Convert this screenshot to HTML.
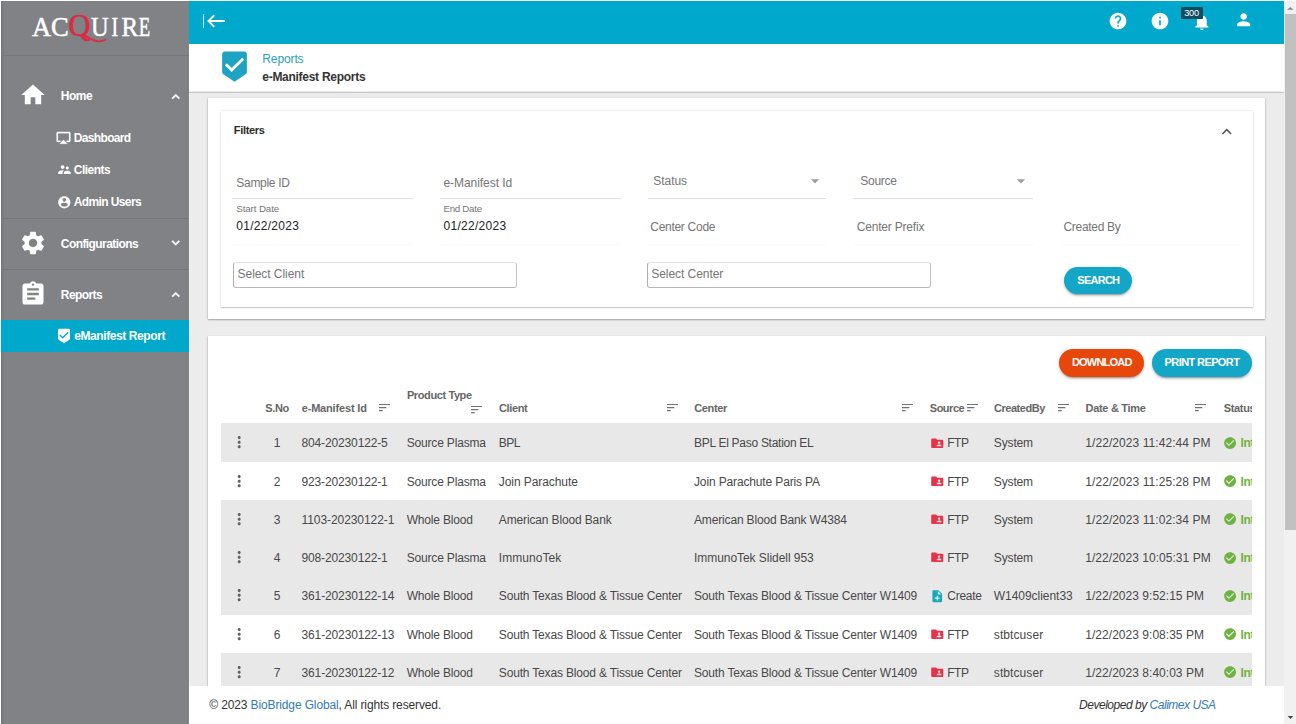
<!DOCTYPE html>
<html lang="en">
<head>
<meta charset="utf-8">
<title>e-Manifest Reports</title>
<style>
*{box-sizing:border-box;margin:0;padding:0}
html,body{width:1296px;height:724px;overflow:hidden;background:#fff}
body{font-family:"Liberation Sans",sans-serif;font-size:12px;color:#333;position:relative}
a{color:#337ab7;text-decoration:none}
.t{position:absolute;white-space:pre}
.ic{position:absolute;display:block}
.box{position:absolute}
#side{left:1px;top:1px;width:188px;height:723px;background:#808285}
#sideedge{left:1px;top:1px;width:4px;height:723px;background:linear-gradient(90deg,#76787b,#808285)}
.sdiv{left:1px;width:188px;height:1px;background:#747679}
#act{left:1px;top:319.6px;width:188px;height:32.9px;background:#00a9cb}
#top{left:189px;top:1px;width:1095px;height:43px;background:#00a9cb}
#crumb{left:189px;top:44px;width:1095px;height:48.5px;background:#fff;border-bottom:1px solid #c6c6c6;box-shadow:inset 0 -1px 1px rgba(0,0,0,.07)}
#main{left:189px;top:92.5px;width:1095px;height:594px;background:#ececec}
.card{background:#fff;box-shadow:0 1px 1.5px rgba(0,0,0,.3),1px 0 1px rgba(0,0,0,.05),-1px 0 1px rgba(0,0,0,.05)}
.panel{background:#fff;box-shadow:0 1px 1px rgba(0,0,0,.16),0 0 1.5px rgba(0,0,0,.22)}
.ul{height:1px;background:#e0e0e0}
.ul2{height:1px;background:#fafafa}
.inp{height:25.2px;border:1px solid;border-color:#e4e4e4 #c2c2c2 #b8b8b8 #b0b0b0;border-radius:3px;background:#fff}
.btn{border-radius:14px;box-shadow:0 3px 1px -2px rgba(0,0,0,.2),0 2px 2px 0 rgba(0,0,0,.14),0 1px 5px 0 rgba(0,0,0,.12)}
.row{left:221px;width:1031px;height:38.25px;background:#e8e8e8}
#tclip{left:0;top:337px;width:1252px;height:349.5px;overflow:hidden}
#tclip>*{margin-top:-337px}
#foot{left:189px;top:686.3px;width:1095px;height:38px;background:#fff}
#sb{left:1284px;top:1px;width:12px;height:723px;background:#f1f1f1}
#sbt{left:1285px;top:14.2px;width:11px;height:515.5px;background:#c1c1c1}
.badge{left:1180.8px;top:6.8px;width:21.8px;height:11.8px;background:#0c4c5e;border-radius:1px}
</style>
</head>
<body>
<div class="box" id="side"></div><div class="box" id="sideedge"></div>
<div class="box sdiv" style="top:55px"></div><div class="box sdiv" style="top:218px"></div><div class="box sdiv" style="top:269px"></div>
<div class="box" id="act"></div>
<svg class="ic" id="logo" style="left:28px;top:8px;width:130px;height:40px;overflow:visible" viewBox="0 0 130 40"><text x="4.10 22.90 40.40 63.00 83.40 93.60 110.70" y="27.6" font-family="'Liberation Serif',serif" font-size="26.5" fill="#fff" stroke="#fff" stroke-width="0.5">AC<tspan fill="#dd2a45" stroke="#dd2a45" stroke-width="0.7" font-size="30.5" dy="0.5">Q</tspan><tspan dy="-0.5" textLength="17.6" lengthAdjust="spacingAndGlyphs">U</tspan><tspan textLength="6.6" lengthAdjust="spacingAndGlyphs">I</tspan><tspan textLength="16.6" lengthAdjust="spacingAndGlyphs">R</tspan><tspan textLength="11.4" lengthAdjust="spacingAndGlyphs">E</tspan></text><path d="M55 25.8 C60.500 30.200 66 33.400 70.500 33.300 C73.500 33.200 76 32.600 77.500 31.700" fill="none" stroke="#dd2a45" stroke-width="1.8" stroke-linecap="round"/></svg>
<svg class="ic" style="left:19.30px;top:81.40px;width:28px;height:28px;fill:#fff;" viewBox="0 0 24 24"><path d="M10 20v-6h4v6h5v-8h3L12 3 2 12h3v8z"/></svg>
<svg class="ic" style="left:19.30px;top:229.20px;width:28px;height:28px;fill:#fff;" viewBox="0 0 24 24"><path d="M19.14 12.94c.04-.3.06-.61.06-.94 0-.32-.02-.64-.07-.94l2.03-1.58c.18-.14.23-.41.12-.61l-1.92-3.32c-.12-.22-.37-.29-.59-.22l-2.39.96c-.5-.38-1.03-.7-1.62-.94l-.36-2.54c-.04-.24-.24-.41-.48-.41h-3.84c-.24 0-.43.17-.47.41l-.36 2.54c-.59.24-1.13.57-1.62.94l-2.39-.96c-.22-.08-.47 0-.59.22L2.74 8.87c-.12.21-.08.47.12.61l2.03 1.58c-.05.3-.09.63-.09.94s.02.64.07.94l-2.03 1.58c-.18.14-.23.41-.12.61l1.92 3.32c.12.22.37.29.59.22l2.39-.96c.5.38 1.03.7 1.62.94l.36 2.54c.05.24.24.41.48.41h3.84c.24 0 .44-.17.47-.41l.36-2.54c.59-.24 1.13-.56 1.62-.94l2.39.96c.22.08.47 0 .59-.22l1.92-3.32c.12-.22.07-.47-.12-.61l-2.01-1.58zM12 15.6c-1.98 0-3.6-1.62-3.6-3.6s1.62-3.6 3.6-3.6 3.6 1.62 3.6 3.6-1.62 3.6-3.6 3.6z"/></svg>
<svg class="ic" style="left:19.20px;top:280.20px;width:28px;height:28px;fill:#fff;" viewBox="0 0 24 24"><path d="M19 3h-4.18C14.4 1.84 13.3 1 12 1c-1.3 0-2.4.84-2.82 2H5c-1.1 0-2 .9-2 2v14c0 1.1.9 2 2 2h14c1.1 0 2-.9 2-2V5c0-1.1-.9-2-2-2zm-7 0c.55 0 1 .45 1 1s-.45 1-1 1-1-.45-1-1 .45-1 1-1zm2 14H7v-2h7v2zm3-4H7v-2h10v2zm0-4H7V7h10v2z"/></svg>
<svg class="ic" style="left:168.15px;top:89.25px;width:15.5px;height:15.5px;fill:#fff;stroke:#fff;stroke-width:.9" viewBox="0 0 24 24"><path d="M12 8l-6 6 1.41 1.41L12 10.83l4.59 4.58L18 14z"/></svg>
<svg class="ic" style="left:168.15px;top:235.25px;width:15.5px;height:15.5px;fill:#fff;stroke:#fff;stroke-width:.9" viewBox="0 0 24 24"><path d="M16.59 8.59L12 13.17 7.41 8.59 6 10l6 6 6-6z"/></svg>
<svg class="ic" style="left:168.15px;top:287.25px;width:15.5px;height:15.5px;fill:#fff;stroke:#fff;stroke-width:.9" viewBox="0 0 24 24"><path d="M12 8l-6 6 1.41 1.41L12 10.83l4.59 4.58L18 14z"/></svg>
<svg class="ic" style="left:56.40px;top:129.70px;width:15px;height:15px;fill:#fff;stroke:#fff;stroke-width:.5" viewBox="0 0 24 24"><path d="M6 22h12l-6-6zM21 3H3c-1.1 0-2 .9-2 2v12c0 1.1.9 2 2 2h4v-2H3V5h18v12h-4v2h4c1.1 0 2-.9 2-2V5c0-1.1-.9-2-2-2z"/></svg>
<svg class="ic" style="left:56.60px;top:162.10px;width:15px;height:15px;fill:#fff;" viewBox="0 0 24 24"><path d="M16.5 12c1.38 0 2.49-1.12 2.49-2.5S17.88 7 16.5 7C15.12 7 14 8.12 14 9.5s1.12 2.5 2.5 2.5zM9 11c1.66 0 2.99-1.34 2.99-3S10.66 5 9 5C7.34 5 6 6.34 6 8s1.34 3 3 3zm7.5 3c-1.83 0-5.5.92-5.5 2.75V19h11v-2.25c0-1.83-3.67-2.75-5.5-2.75zM9 13c-2.33 0-7 1.17-7 3.5V19h7v-2.25c0-.85.33-2.34 2.37-3.47C10.5 13.1 9.66 13 9 13z"/></svg>
<svg class="ic" style="left:56.60px;top:194.70px;width:14.6px;height:14.6px;fill:#fff;" viewBox="0 0 24 24"><path d="M12 2C6.48 2 2 6.48 2 12s4.48 10 10 10 10-4.48 10-10S17.52 2 12 2zm0 3c1.66 0 3 1.34 3 3s-1.34 3-3 3-3-1.34-3-3 1.34-3 3-3zm0 14.2c-2.5 0-4.71-1.28-6-3.22.03-1.99 4-3.08 6-3.08 1.99 0 5.970 1.09 6 3.08-1.29 1.940-3.500 3.220-6 3.220z"/></svg>
<svg class="ic" style="left:56.00px;top:328.00px;width:16px;height:16px;fill:#fff;" viewBox="0 0 24 24"><path d="M19 1H5c-1.1 0-1.99.9-1.99 2L3 15.93c0 .69.35 1.3.88 1.66L12 23l8.11-5.41c.53-.36.88-.97.88-1.66L21 3c0-1.1-.9-2-2-2zm-9 15l-5-5 1.41-1.41L10 13.17l7.59-7.590L19 7l-9 9z"/></svg>
<span class="t" style="left:60.8px;top:87.8px;font-size:12px;line-height:16px;color:#fff;font-weight:700;letter-spacing:-0.46px;">Home</span>
<span class="t" style="left:73.8px;top:129.5px;font-size:12px;line-height:16px;color:#fff;font-weight:700;letter-spacing:-0.66px;">Dashboard</span>
<span class="t" style="left:73.8px;top:161.6px;font-size:12px;line-height:16px;color:#fff;font-weight:700;letter-spacing:-0.51px;">Clients</span>
<span class="t" style="left:73.8px;top:193.6px;font-size:12px;line-height:16px;color:#fff;font-weight:700;letter-spacing:-0.62px;">Admin Users</span>
<span class="t" style="left:60.8px;top:235.8px;font-size:12px;line-height:16px;color:#fff;font-weight:700;letter-spacing:-0.57px;">Configurations</span>
<span class="t" style="left:60.8px;top:286.8px;font-size:12px;line-height:16px;color:#fff;font-weight:700;letter-spacing:-0.57px;">Reports</span>
<span class="t" style="left:74.2px;top:327.8px;font-size:12px;line-height:16px;color:#fff;font-weight:700;letter-spacing:-0.41px;">eManifest Report</span>
<div class="box" id="top"></div>
<svg class="ic" style="left:200px;top:10px;width:30px;height:22px" viewBox="0 0 30 22"><path d="M3.5 4v14" stroke="#d5f0f6" stroke-width="1" fill="none"/><path d="M25 11H9M14.3 5.2L8.5 11l5.800 5.800" stroke="#fff" stroke-width="1.9" fill="none"/></svg>
<svg class="ic" style="left:1108.00px;top:11.30px;width:20px;height:20px;fill:#fff;" viewBox="0 0 24 24"><path d="M12 2C6.48 2 2 6.48 2 12s4.48 10 10 10 10-4.48 10-10S17.52 2 12 2zm1 17h-2v-2h2v2zm2.07-7.75l-.9.92C13.45 12.9 13 13.5 13 15h-2v-.5c0-1.1.45-2.1 1.17-2.83l1.24-1.260c.37-.36.59-.86.59-1.410 0-1.100-.9-2-2-2s-2 .9-2 2H8c0-2.210 1.790-4 4-4s4 1.790 4 4c0 .88-.36 1.680-.93 2.250z"/></svg>
<svg class="ic" style="left:1150.00px;top:11.30px;width:20px;height:20px;fill:#fff;" viewBox="0 0 24 24"><path d="M12 2C6.48 2 2 6.48 2 12s4.48 10 10 10 10-4.48 10-10S17.52 2 12 2zm1 15h-2v-6h2v6zm0-8h-2V7h2v2z"/></svg>
<svg class="ic" style="left:1191.65px;top:12.35px;width:19.7px;height:19.7px;fill:#fff;" viewBox="0 0 24 24"><path d="M12 22c1.1 0 2-.9 2-2h-4c0 1.1.89 2 2 2zm6-6v-5c0-3.07-1.64-5.64-4.5-6.32V4c0-.83-.67-1.5-1.5-1.500s-1.500.67-1.500 1.500v.68C7.630 5.360 6 7.920 6 11v5l-2 2v1h16v-1l-2-2z"/></svg>
<svg class="ic" style="left:1233.70px;top:9.80px;width:19.4px;height:19.4px;fill:#fff;" viewBox="0 0 24 24"><path d="M12 12c2.21 0 4-1.79 4-4s-1.79-4-4-4-4 1.79-4 4 1.79 4 4 4zm0 2c-2.67 0-8 1.340-8 4v2h16v-2c0-2.660-5.330-4-8-4z"/></svg>
<div class="box badge"></div>
<div class="box" id="crumb"></div>
<svg class="ic" style="left:217.90px;top:50.30px;width:33px;height:33px;fill:#1ea3c3;" viewBox="0 0 24 24"><path d="M19 1H5c-1.1 0-1.99.9-1.99 2L3 15.93c0 .69.35 1.3.88 1.66L12 23l8.11-5.41c.53-.36.88-.97.88-1.66L21 3c0-1.1-.9-2-2-2zm-9 15l-5-5 1.41-1.41L10 13.17l7.59-7.590L19 7l-9 9z"/></svg>
<div class="box" id="main"></div><div class="box" style="left:189px;top:93px;width:1px;height:593px;background:#f3f4f6"></div>
<div class="box card" style="left:208px;top:98px;width:1057px;height:221.3px"></div>
<div class="box panel" style="left:221px;top:111.4px;width:1031.5px;height:195.6px"></div>
<svg class="ic" style="left:1217.25px;top:121.95px;width:19.5px;height:19.5px;fill:#555;" viewBox="0 0 24 24"><path d="M12 8l-6 6 1.41 1.41L12 10.83l4.59 4.58L18 14z"/></svg>
<div class="box ul" style="left:232.2px;top:198px;width:180.8px"></div>
<div class="box ul" style="left:439.9px;top:198px;width:181.2px"></div>
<div class="box ul" style="left:648px;top:198px;width:177.5px"></div>
<div class="box ul" style="left:852.6px;top:198px;width:180px"></div>
<div class="box ul2" style="left:232.2px;top:244.2px;width:180.5px"></div>
<div class="box ul2" style="left:439.9px;top:244.2px;width:180.5px"></div>
<div class="box ul2" style="left:646.8px;top:244.2px;width:180.5px"></div>
<div class="box ul2" style="left:853.7px;top:244.2px;width:180.5px"></div>
<div class="box ul2" style="left:1060.5px;top:244.2px;width:180.5px"></div>
<svg class="ic" style="left:805.10px;top:171.40px;width:20px;height:20px;fill:#9c9c9c;" viewBox="0 0 24 24"><path d="M7 10l5 5 5-5z"/></svg>
<svg class="ic" style="left:1011.40px;top:171.40px;width:20px;height:20px;fill:#9c9c9c;" viewBox="0 0 24 24"><path d="M7 10l5 5 5-5z"/></svg>
<div class="box inp" style="left:233.3px;top:262.4px;width:283.4px"></div>
<div class="box inp" style="left:647.2px;top:262.4px;width:283.4px"></div>
<div class="box btn" style="left:1064.2px;top:266.7px;width:67.7px;height:27.2px;background:#14a6c6"></div>
<div class="box card" style="left:208px;top:336px;width:1057px;height:360px"></div>
<div class="box btn" style="left:1059px;top:349px;width:85.4px;height:27.5px;background:#e8470b"></div>
<div class="box btn" style="left:1152px;top:349px;width:100px;height:27.5px;background:#14a6c6"></div>
<div class="box" id="tclip">
<div class="box row" style="top:423.3px"></div>
<div class="box row" style="top:499.8px"></div>
<div class="box row" style="top:538.0px"></div>
<div class="box row" style="top:576.3px"></div>
<div class="box row" style="top:652.8px"></div>
<svg class="ic" style="left:230.30px;top:433.45px;width:18.4px;height:18.4px;fill:#606060;" viewBox="0 0 24 24"><path d="M12 8c1.1 0 2-.9 2-2s-.9-2-2-2-2 .9-2 2 .9 2 2 2zm0 2c-1.1 0-2 .9-2 2s.9 2 2 2 2-.9 2-2-.9-2-2-2zm0 6c-1.100 0-2 .9-2 2s.9 2 2 2 2-.9 2-2-.9-2-2-2z"/></svg>
<svg class="ic" style="left:929.65px;top:435.70px;width:14.5px;height:14.5px;fill:#e7324a;" viewBox="0 0 24 24"><path d="M20 6h-8l-2-2H4c-1.1 0-1.99.9-1.99 2L2 18c0 1.100.9 2 2 2h16c1.100 0 2-.9 2-2V8c0-1.100-.9-2-2-2zm-5 3c1.100 0 2 .9 2 2s-.9 2-2 2-2-.9-2-2 .9-2 2-2zm4 8h-8v-1c0-1.330 2.670-2 4-2s4 .670 4 2v1z"/></svg>
<svg class="ic" style="left:1223.10px;top:435.85px;width:14.2px;height:14.2px;fill:#6cb33f;" viewBox="0 0 24 24"><path d="M12 2C6.48 2 2 6.48 2 12s4.480 10 10 10 10-4.480 10-10S17.520 2 12 2zm-2 15l-5-5 1.410-1.410L10 14.170l7.590-7.590L19 8l-9 9z"/></svg>
<svg class="ic" style="left:230.30px;top:471.70px;width:18.4px;height:18.4px;fill:#606060;" viewBox="0 0 24 24"><path d="M12 8c1.1 0 2-.9 2-2s-.9-2-2-2-2 .9-2 2 .9 2 2 2zm0 2c-1.1 0-2 .9-2 2s.9 2 2 2 2-.9 2-2-.9-2-2-2zm0 6c-1.100 0-2 .9-2 2s.9 2 2 2 2-.9 2-2-.9-2-2-2z"/></svg>
<svg class="ic" style="left:929.65px;top:473.95px;width:14.5px;height:14.5px;fill:#e7324a;" viewBox="0 0 24 24"><path d="M20 6h-8l-2-2H4c-1.1 0-1.99.9-1.99 2L2 18c0 1.100.9 2 2 2h16c1.100 0 2-.9 2-2V8c0-1.100-.9-2-2-2zm-5 3c1.100 0 2 .9 2 2s-.9 2-2 2-2-.9-2-2 .9-2 2-2zm4 8h-8v-1c0-1.330 2.670-2 4-2s4 .670 4 2v1z"/></svg>
<svg class="ic" style="left:1223.10px;top:474.10px;width:14.2px;height:14.2px;fill:#6cb33f;" viewBox="0 0 24 24"><path d="M12 2C6.48 2 2 6.48 2 12s4.480 10 10 10 10-4.480 10-10S17.520 2 12 2zm-2 15l-5-5 1.410-1.410L10 14.170l7.590-7.590L19 8l-9 9z"/></svg>
<svg class="ic" style="left:230.30px;top:509.95px;width:18.4px;height:18.4px;fill:#606060;" viewBox="0 0 24 24"><path d="M12 8c1.1 0 2-.9 2-2s-.9-2-2-2-2 .9-2 2 .9 2 2 2zm0 2c-1.1 0-2 .9-2 2s.9 2 2 2 2-.9 2-2-.9-2-2-2zm0 6c-1.100 0-2 .9-2 2s.9 2 2 2 2-.9 2-2-.9-2-2-2z"/></svg>
<svg class="ic" style="left:929.65px;top:512.20px;width:14.5px;height:14.5px;fill:#e7324a;" viewBox="0 0 24 24"><path d="M20 6h-8l-2-2H4c-1.1 0-1.99.9-1.99 2L2 18c0 1.100.9 2 2 2h16c1.100 0 2-.9 2-2V8c0-1.100-.9-2-2-2zm-5 3c1.100 0 2 .9 2 2s-.9 2-2 2-2-.9-2-2 .9-2 2-2zm4 8h-8v-1c0-1.330 2.670-2 4-2s4 .670 4 2v1z"/></svg>
<svg class="ic" style="left:1223.10px;top:512.35px;width:14.2px;height:14.2px;fill:#6cb33f;" viewBox="0 0 24 24"><path d="M12 2C6.48 2 2 6.48 2 12s4.480 10 10 10 10-4.480 10-10S17.520 2 12 2zm-2 15l-5-5 1.410-1.410L10 14.170l7.590-7.590L19 8l-9 9z"/></svg>
<svg class="ic" style="left:230.30px;top:548.20px;width:18.4px;height:18.4px;fill:#606060;" viewBox="0 0 24 24"><path d="M12 8c1.1 0 2-.9 2-2s-.9-2-2-2-2 .9-2 2 .9 2 2 2zm0 2c-1.1 0-2 .9-2 2s.9 2 2 2 2-.9 2-2-.9-2-2-2zm0 6c-1.100 0-2 .9-2 2s.9 2 2 2 2-.9 2-2-.9-2-2-2z"/></svg>
<svg class="ic" style="left:929.65px;top:550.45px;width:14.5px;height:14.5px;fill:#e7324a;" viewBox="0 0 24 24"><path d="M20 6h-8l-2-2H4c-1.1 0-1.99.9-1.99 2L2 18c0 1.100.9 2 2 2h16c1.100 0 2-.9 2-2V8c0-1.100-.9-2-2-2zm-5 3c1.100 0 2 .9 2 2s-.9 2-2 2-2-.9-2-2 .9-2 2-2zm4 8h-8v-1c0-1.330 2.670-2 4-2s4 .670 4 2v1z"/></svg>
<svg class="ic" style="left:1223.10px;top:550.60px;width:14.2px;height:14.2px;fill:#6cb33f;" viewBox="0 0 24 24"><path d="M12 2C6.48 2 2 6.48 2 12s4.480 10 10 10 10-4.480 10-10S17.520 2 12 2zm-2 15l-5-5 1.410-1.410L10 14.170l7.590-7.590L19 8l-9 9z"/></svg>
<svg class="ic" style="left:230.30px;top:586.45px;width:18.4px;height:18.4px;fill:#606060;" viewBox="0 0 24 24"><path d="M12 8c1.1 0 2-.9 2-2s-.9-2-2-2-2 .9-2 2 .9 2 2 2zm0 2c-1.1 0-2 .9-2 2s.9 2 2 2 2-.9 2-2-.9-2-2-2zm0 6c-1.100 0-2 .9-2 2s.9 2 2 2 2-.9 2-2-.9-2-2-2z"/></svg>
<svg class="ic" style="left:929.65px;top:588.70px;width:14.5px;height:14.5px;fill:#16a9b9;" viewBox="0 0 24 24"><path d="M14 2H6c-1.100 0-1.990.9-1.990 2L4 20c0 1.100.890 2 1.990 2H18c1.100 0 2-.9 2-2V8l-6-6zm2 14h-3v3h-2v-3H8v-2h3v-3h2v3h3v2zm-3-7V3.500L18.500 9H13z"/></svg>
<svg class="ic" style="left:1223.10px;top:588.85px;width:14.2px;height:14.2px;fill:#6cb33f;" viewBox="0 0 24 24"><path d="M12 2C6.48 2 2 6.48 2 12s4.480 10 10 10 10-4.480 10-10S17.520 2 12 2zm-2 15l-5-5 1.410-1.410L10 14.170l7.590-7.590L19 8l-9 9z"/></svg>
<svg class="ic" style="left:230.30px;top:624.70px;width:18.4px;height:18.4px;fill:#606060;" viewBox="0 0 24 24"><path d="M12 8c1.1 0 2-.9 2-2s-.9-2-2-2-2 .9-2 2 .9 2 2 2zm0 2c-1.1 0-2 .9-2 2s.9 2 2 2 2-.9 2-2-.9-2-2-2zm0 6c-1.100 0-2 .9-2 2s.9 2 2 2 2-.9 2-2-.9-2-2-2z"/></svg>
<svg class="ic" style="left:929.65px;top:626.95px;width:14.5px;height:14.5px;fill:#e7324a;" viewBox="0 0 24 24"><path d="M20 6h-8l-2-2H4c-1.1 0-1.99.9-1.99 2L2 18c0 1.100.9 2 2 2h16c1.100 0 2-.9 2-2V8c0-1.100-.9-2-2-2zm-5 3c1.100 0 2 .9 2 2s-.9 2-2 2-2-.9-2-2 .9-2 2-2zm4 8h-8v-1c0-1.330 2.670-2 4-2s4 .670 4 2v1z"/></svg>
<svg class="ic" style="left:1223.10px;top:627.10px;width:14.2px;height:14.2px;fill:#6cb33f;" viewBox="0 0 24 24"><path d="M12 2C6.48 2 2 6.48 2 12s4.480 10 10 10 10-4.480 10-10S17.520 2 12 2zm-2 15l-5-5 1.410-1.410L10 14.170l7.590-7.590L19 8l-9 9z"/></svg>
<svg class="ic" style="left:230.30px;top:662.95px;width:18.4px;height:18.4px;fill:#606060;" viewBox="0 0 24 24"><path d="M12 8c1.1 0 2-.9 2-2s-.9-2-2-2-2 .9-2 2 .9 2 2 2zm0 2c-1.1 0-2 .9-2 2s.9 2 2 2 2-.9 2-2-.9-2-2-2zm0 6c-1.100 0-2 .9-2 2s.9 2 2 2 2-.9 2-2-.9-2-2-2z"/></svg>
<svg class="ic" style="left:929.65px;top:665.20px;width:14.5px;height:14.5px;fill:#e7324a;" viewBox="0 0 24 24"><path d="M20 6h-8l-2-2H4c-1.1 0-1.99.9-1.99 2L2 18c0 1.100.9 2 2 2h16c1.100 0 2-.9 2-2V8c0-1.100-.9-2-2-2zm-5 3c1.100 0 2 .9 2 2s-.9 2-2 2-2-.9-2-2 .9-2 2-2zm4 8h-8v-1c0-1.330 2.670-2 4-2s4 .670 4 2v1z"/></svg>
<svg class="ic" style="left:1223.10px;top:665.35px;width:14.2px;height:14.2px;fill:#6cb33f;" viewBox="0 0 24 24"><path d="M12 2C6.48 2 2 6.48 2 12s4.480 10 10 10 10-4.480 10-10S17.520 2 12 2zm-2 15l-5-5 1.410-1.410L10 14.170l7.590-7.590L19 8l-9 9z"/></svg>
<svg class="ic" style="left:379.3px;top:403.9px;width:12px;height:8px;fill:#727272" viewBox="0 0 12 8"><path d="M0 0h11v1.120H0zM0 3.050h7.350v1.120H0zM0 6.100h3.700v1.120H0z"/></svg>
<svg class="ic" style="left:471.1px;top:405.9px;width:12px;height:8px;fill:#727272" viewBox="0 0 12 8"><path d="M0 0h11v1.120H0zM0 3.050h7.350v1.120H0zM0 6.100h3.700v1.120H0z"/></svg>
<svg class="ic" style="left:666.8px;top:403.9px;width:12px;height:8px;fill:#727272" viewBox="0 0 12 8"><path d="M0 0h11v1.120H0zM0 3.050h7.350v1.120H0zM0 6.100h3.700v1.120H0z"/></svg>
<svg class="ic" style="left:902px;top:403.9px;width:12px;height:8px;fill:#727272" viewBox="0 0 12 8"><path d="M0 0h11v1.120H0zM0 3.050h7.350v1.120H0zM0 6.100h3.700v1.120H0z"/></svg>
<svg class="ic" style="left:966.8px;top:403.9px;width:12px;height:8px;fill:#727272" viewBox="0 0 12 8"><path d="M0 0h11v1.120H0zM0 3.050h7.350v1.120H0zM0 6.100h3.700v1.120H0z"/></svg>
<svg class="ic" style="left:1058px;top:403.9px;width:12px;height:8px;fill:#727272" viewBox="0 0 12 8"><path d="M0 0h11v1.120H0zM0 3.050h7.350v1.120H0zM0 6.100h3.700v1.120H0z"/></svg>
<svg class="ic" style="left:1195.4px;top:403.9px;width:12px;height:8px;fill:#727272" viewBox="0 0 12 8"><path d="M0 0h11v1.120H0zM0 3.050h7.350v1.120H0zM0 6.100h3.700v1.120H0z"/></svg>
<span class="t" style="left:265.2px;top:401.1px;font-size:11px;line-height:14px;color:#666;font-weight:700;letter-spacing:-0.34px;">S.No</span>
<span class="t" style="left:301.7px;top:401.1px;font-size:11px;line-height:14px;color:#666;font-weight:700;letter-spacing:-0.17px;">e-Manifest Id</span>
<span class="t" style="left:406.9px;top:388.0px;font-size:11px;line-height:14px;color:#666;font-weight:700;letter-spacing:-0.39px;">Product Type</span>
<span class="t" style="left:499.0px;top:401.1px;font-size:11px;line-height:14px;color:#666;font-weight:700;letter-spacing:-0.36px;">Client</span>
<span class="t" style="left:694.3px;top:401.1px;font-size:11px;line-height:14px;color:#666;font-weight:700;letter-spacing:-0.38px;">Center</span>
<span class="t" style="left:929.8px;top:401.1px;font-size:11px;line-height:14px;color:#666;font-weight:700;letter-spacing:-0.49px;">Source</span>
<span class="t" style="left:994.0px;top:401.1px;font-size:11px;line-height:14px;color:#666;font-weight:700;letter-spacing:-0.47px;">CreatedBy</span>
<span class="t" style="left:1085.6px;top:401.1px;font-size:11px;line-height:14px;color:#666;font-weight:700;letter-spacing:-0.32px;">Date &amp; Time</span>
<span class="t" style="left:1223.7px;top:401.1px;font-size:11px;line-height:14px;color:#666;font-weight:700;letter-spacing:-0.33px;">Status</span>
<span class="t" style="left:273.7px;top:435.3px;font-size:12px;line-height:16px;color:#484848;letter-spacing:-0.05px;">1</span>
<span class="t" style="left:301.5px;top:435.3px;font-size:12px;line-height:16px;color:#484848;letter-spacing:-0.14px;">804-20230122-5</span>
<span class="t" style="left:406.7px;top:435.3px;font-size:12px;line-height:16px;color:#484848;letter-spacing:-0.17px;">Source Plasma</span>
<span class="t" style="left:498.8px;top:435.3px;font-size:12px;line-height:16px;color:#484848;letter-spacing:-0.51px;">BPL</span>
<span class="t" style="left:694.0px;top:435.3px;font-size:12px;line-height:16px;color:#484848;letter-spacing:-0.28px;">BPL El Paso Station EL</span>
<span class="t" style="left:947.3px;top:435.3px;font-size:12px;line-height:16px;color:#484848;letter-spacing:-0.51px;">FTP</span>
<span class="t" style="left:993.8px;top:435.3px;font-size:12px;line-height:16px;color:#484848;letter-spacing:-0.14px;">System</span>
<span class="t" style="left:1085.3px;top:435.3px;font-size:12px;line-height:16px;color:#484848;letter-spacing:0.07px;">1/22/2023 11:42:44 PM</span>
<span class="t" style="left:1240.5px;top:435.3px;font-size:12px;line-height:16px;color:#6cb33f;font-weight:700;letter-spacing:-0.27px;">Interfaced</span>
<span class="t" style="left:273.7px;top:473.5px;font-size:12px;line-height:16px;color:#484848;letter-spacing:-0.05px;">2</span>
<span class="t" style="left:301.5px;top:473.5px;font-size:12px;line-height:16px;color:#484848;letter-spacing:-0.14px;">923-20230122-1</span>
<span class="t" style="left:406.7px;top:473.5px;font-size:12px;line-height:16px;color:#484848;letter-spacing:-0.17px;">Source Plasma</span>
<span class="t" style="left:498.8px;top:473.5px;font-size:12px;line-height:16px;color:#484848;letter-spacing:-0.08px;">Join Parachute</span>
<span class="t" style="left:694.0px;top:473.5px;font-size:12px;line-height:16px;color:#484848;letter-spacing:-0.14px;">Join Parachute Paris PA</span>
<span class="t" style="left:947.3px;top:473.5px;font-size:12px;line-height:16px;color:#484848;letter-spacing:-0.51px;">FTP</span>
<span class="t" style="left:993.8px;top:473.5px;font-size:12px;line-height:16px;color:#484848;letter-spacing:-0.14px;">System</span>
<span class="t" style="left:1085.3px;top:473.5px;font-size:12px;line-height:16px;color:#484848;letter-spacing:0.07px;">1/22/2023 11:25:28 PM</span>
<span class="t" style="left:1240.5px;top:473.5px;font-size:12px;line-height:16px;color:#6cb33f;font-weight:700;letter-spacing:-0.27px;">Interfaced</span>
<span class="t" style="left:273.7px;top:511.8px;font-size:12px;line-height:16px;color:#484848;letter-spacing:-0.05px;">3</span>
<span class="t" style="left:301.5px;top:511.8px;font-size:12px;line-height:16px;color:#484848;letter-spacing:-0.07px;">1103-20230122-1</span>
<span class="t" style="left:406.7px;top:511.8px;font-size:12px;line-height:16px;color:#484848;letter-spacing:-0.17px;">Whole Blood</span>
<span class="t" style="left:498.8px;top:511.8px;font-size:12px;line-height:16px;color:#484848;letter-spacing:-0.14px;">American Blood Bank</span>
<span class="t" style="left:694.0px;top:511.8px;font-size:12px;line-height:16px;color:#484848;letter-spacing:-0.16px;">American Blood Bank W4384</span>
<span class="t" style="left:947.3px;top:511.8px;font-size:12px;line-height:16px;color:#484848;letter-spacing:-0.51px;">FTP</span>
<span class="t" style="left:993.8px;top:511.8px;font-size:12px;line-height:16px;color:#484848;letter-spacing:-0.14px;">System</span>
<span class="t" style="left:1085.3px;top:511.8px;font-size:12px;line-height:16px;color:#484848;letter-spacing:0.07px;">1/22/2023 11:02:34 PM</span>
<span class="t" style="left:1240.5px;top:511.8px;font-size:12px;line-height:16px;color:#6cb33f;font-weight:700;letter-spacing:-0.27px;">Interfaced</span>
<span class="t" style="left:273.7px;top:550.0px;font-size:12px;line-height:16px;color:#484848;letter-spacing:-0.05px;">4</span>
<span class="t" style="left:301.5px;top:550.0px;font-size:12px;line-height:16px;color:#484848;letter-spacing:-0.14px;">908-20230122-1</span>
<span class="t" style="left:406.7px;top:550.0px;font-size:12px;line-height:16px;color:#484848;letter-spacing:-0.17px;">Source Plasma</span>
<span class="t" style="left:498.8px;top:550.0px;font-size:12px;line-height:16px;color:#484848;letter-spacing:0.04px;">ImmunoTek</span>
<span class="t" style="left:694.0px;top:550.0px;font-size:12px;line-height:16px;color:#484848;letter-spacing:-0.05px;">ImmunoTek Slidell 953</span>
<span class="t" style="left:947.3px;top:550.0px;font-size:12px;line-height:16px;color:#484848;letter-spacing:-0.51px;">FTP</span>
<span class="t" style="left:993.8px;top:550.0px;font-size:12px;line-height:16px;color:#484848;letter-spacing:-0.14px;">System</span>
<span class="t" style="left:1085.3px;top:550.0px;font-size:12px;line-height:16px;color:#484848;letter-spacing:0.03px;">1/22/2023 10:05:31 PM</span>
<span class="t" style="left:1240.5px;top:550.0px;font-size:12px;line-height:16px;color:#6cb33f;font-weight:700;letter-spacing:-0.27px;">Interfaced</span>
<span class="t" style="left:273.7px;top:588.3px;font-size:12px;line-height:16px;color:#484848;letter-spacing:-0.05px;">5</span>
<span class="t" style="left:301.5px;top:588.3px;font-size:12px;line-height:16px;color:#484848;letter-spacing:-0.13px;">361-20230122-14</span>
<span class="t" style="left:406.7px;top:588.3px;font-size:12px;line-height:16px;color:#484848;letter-spacing:-0.17px;">Whole Blood</span>
<span class="t" style="left:498.8px;top:588.3px;font-size:12px;line-height:16px;color:#484848;letter-spacing:-0.17px;">South Texas Blood &amp; Tissue Center</span>
<span class="t" style="left:694.0px;top:588.3px;font-size:12px;line-height:16px;color:#484848;letter-spacing:-0.18px;">South Texas Blood &amp; Tissue Center W1409</span>
<span class="t" style="left:947.3px;top:588.3px;font-size:12px;line-height:16px;color:#484848;letter-spacing:-0.27px;">Create</span>
<span class="t" style="left:993.8px;top:588.3px;font-size:12px;line-height:16px;color:#484848;letter-spacing:-0.04px;">W1409client33</span>
<span class="t" style="left:1085.3px;top:588.3px;font-size:12px;line-height:16px;color:#484848;letter-spacing:0.03px;">1/22/2023 9:52:15 PM</span>
<span class="t" style="left:1240.5px;top:588.3px;font-size:12px;line-height:16px;color:#6cb33f;font-weight:700;letter-spacing:-0.27px;">Interfaced</span>
<span class="t" style="left:273.7px;top:626.5px;font-size:12px;line-height:16px;color:#484848;letter-spacing:-0.05px;">6</span>
<span class="t" style="left:301.5px;top:626.5px;font-size:12px;line-height:16px;color:#484848;letter-spacing:-0.13px;">361-20230122-13</span>
<span class="t" style="left:406.7px;top:626.5px;font-size:12px;line-height:16px;color:#484848;letter-spacing:-0.17px;">Whole Blood</span>
<span class="t" style="left:498.8px;top:626.5px;font-size:12px;line-height:16px;color:#484848;letter-spacing:-0.17px;">South Texas Blood &amp; Tissue Center</span>
<span class="t" style="left:694.0px;top:626.5px;font-size:12px;line-height:16px;color:#484848;letter-spacing:-0.18px;">South Texas Blood &amp; Tissue Center W1409</span>
<span class="t" style="left:947.3px;top:626.5px;font-size:12px;line-height:16px;color:#484848;letter-spacing:-0.51px;">FTP</span>
<span class="t" style="left:993.8px;top:626.5px;font-size:12px;line-height:16px;color:#484848;letter-spacing:0.09px;">stbtcuser</span>
<span class="t" style="left:1085.3px;top:626.5px;font-size:12px;line-height:16px;color:#484848;letter-spacing:0.03px;">1/22/2023 9:08:35 PM</span>
<span class="t" style="left:1240.5px;top:626.5px;font-size:12px;line-height:16px;color:#6cb33f;font-weight:700;letter-spacing:-0.27px;">Interfaced</span>
<span class="t" style="left:273.7px;top:664.8px;font-size:12px;line-height:16px;color:#484848;letter-spacing:-0.05px;">7</span>
<span class="t" style="left:301.5px;top:664.8px;font-size:12px;line-height:16px;color:#484848;letter-spacing:-0.13px;">361-20230122-12</span>
<span class="t" style="left:406.7px;top:664.8px;font-size:12px;line-height:16px;color:#484848;letter-spacing:-0.17px;">Whole Blood</span>
<span class="t" style="left:498.8px;top:664.8px;font-size:12px;line-height:16px;color:#484848;letter-spacing:-0.17px;">South Texas Blood &amp; Tissue Center</span>
<span class="t" style="left:694.0px;top:664.8px;font-size:12px;line-height:16px;color:#484848;letter-spacing:-0.18px;">South Texas Blood &amp; Tissue Center W1409</span>
<span class="t" style="left:947.3px;top:664.8px;font-size:12px;line-height:16px;color:#484848;letter-spacing:-0.51px;">FTP</span>
<span class="t" style="left:993.8px;top:664.8px;font-size:12px;line-height:16px;color:#484848;letter-spacing:0.09px;">stbtcuser</span>
<span class="t" style="left:1085.3px;top:664.8px;font-size:12px;line-height:16px;color:#484848;letter-spacing:0.03px;">1/22/2023 8:40:03 PM</span>
<span class="t" style="left:1240.5px;top:664.8px;font-size:12px;line-height:16px;color:#6cb33f;font-weight:700;letter-spacing:-0.27px;">Interfaced</span>
</div>
<div class="box" id="foot"></div>
<span class="t" style="left:262.3px;top:50.8px;font-size:12px;line-height:16px;color:#2a9fbd;letter-spacing:-0.12px;">Reports</span>
<span class="t" style="left:262.3px;top:68.8px;font-size:12px;line-height:16px;color:#333;font-weight:700;letter-spacing:-0.28px;">e-Manifest Reports</span>
<span class="t" style="left:233.8px;top:122.9px;font-size:11px;line-height:14px;color:#2c2c2c;font-weight:700;letter-spacing:-0.33px;">Filters</span>
<span class="t" style="left:236.3px;top:174.8px;font-size:12px;line-height:16px;color:#757575;letter-spacing:-0.29px;">Sample ID</span>
<span class="t" style="left:443.5px;top:174.8px;font-size:12px;line-height:16px;color:#757575;letter-spacing:-0.06px;">e-Manifest Id</span>
<span class="t" style="left:653.3px;top:173.0px;font-size:12px;line-height:16px;color:#757575;letter-spacing:-0.04px;">Status</span>
<span class="t" style="left:860.2px;top:173.0px;font-size:12px;line-height:16px;color:#757575;letter-spacing:-0.24px;">Source</span>
<span class="t" style="left:236.3px;top:202.4px;font-size:9.75px;line-height:13px;color:#757575;letter-spacing:-0.11px;">Start Date</span>
<span class="t" style="left:443.5px;top:202.4px;font-size:9.75px;line-height:13px;color:#757575;letter-spacing:-0.30px;">End Date</span>
<span class="t" style="left:236.3px;top:217.8px;font-size:12px;line-height:16px;color:#222;letter-spacing:0.28px;">01/22/2023</span>
<span class="t" style="left:443.5px;top:217.8px;font-size:12px;line-height:16px;color:#222;letter-spacing:0.28px;">01/22/2023</span>
<span class="t" style="left:650.3px;top:219.1px;font-size:12px;line-height:16px;color:#757575;letter-spacing:-0.29px;">Center Code</span>
<span class="t" style="left:856.7px;top:219.1px;font-size:12px;line-height:16px;color:#757575;letter-spacing:-0.19px;">Center Prefix</span>
<span class="t" style="left:1063.5px;top:219.1px;font-size:12px;line-height:16px;color:#757575;letter-spacing:-0.31px;">Created By</span>
<span class="t" style="left:237.6px;top:265.7px;font-size:12px;line-height:16px;color:#757575;letter-spacing:-0.06px;">Select Client</span>
<span class="t" style="left:651.2px;top:265.7px;font-size:12px;line-height:16px;color:#757575;letter-spacing:-0.05px;">Select Center</span>
<span class="t" style="left:1077.3px;top:272.7px;font-size:11px;line-height:14px;color:#fff;font-weight:700;letter-spacing:-0.74px;">SEARCH</span>
<span class="t" style="left:1071.9px;top:355.2px;font-size:11px;line-height:14px;color:#fff;font-weight:700;letter-spacing:-0.79px;">DOWNLOAD</span>
<span class="t" style="left:1164.6px;top:355.2px;font-size:11px;line-height:14px;color:#fff;font-weight:700;letter-spacing:-0.60px;">PRINT REPORT</span>
<span class="t" style="left:209.3px;top:697.2px;font-size:12px;line-height:16px;color:#333;letter-spacing:-0.13px;">© 2023 <a>BioBridge Global</a>, All rights reserved.</span>
<span class="t" style="left:1079.1px;top:697.2px;font-size:12px;line-height:16px;color:#333;font-style:italic;letter-spacing:-0.48px;">Developed by <a>Calimex USA</a></span>
<span class="t" style="left:1184.2px;top:6.9px;font-size:9.2px;line-height:12px;color:#fff;letter-spacing:-0.25px;">300</span>
<div class="box" id="sb"></div><div class="box" id="sbt"></div>
<svg class="ic" style="left:1284px;top:1px;width:12px;height:12px" viewBox="0 0 12 12"><path d="M3 8.800L6.300 5.900L9.600 8.800z" fill="#8a8a8a"/></svg>
<svg class="ic" style="left:1284px;top:711px;width:12px;height:12px" viewBox="0 0 12 12"><path d="M3.700 4.900L6.500 7.900L9.300 4.900z" fill="#454545"/></svg>
</body>
</html>
